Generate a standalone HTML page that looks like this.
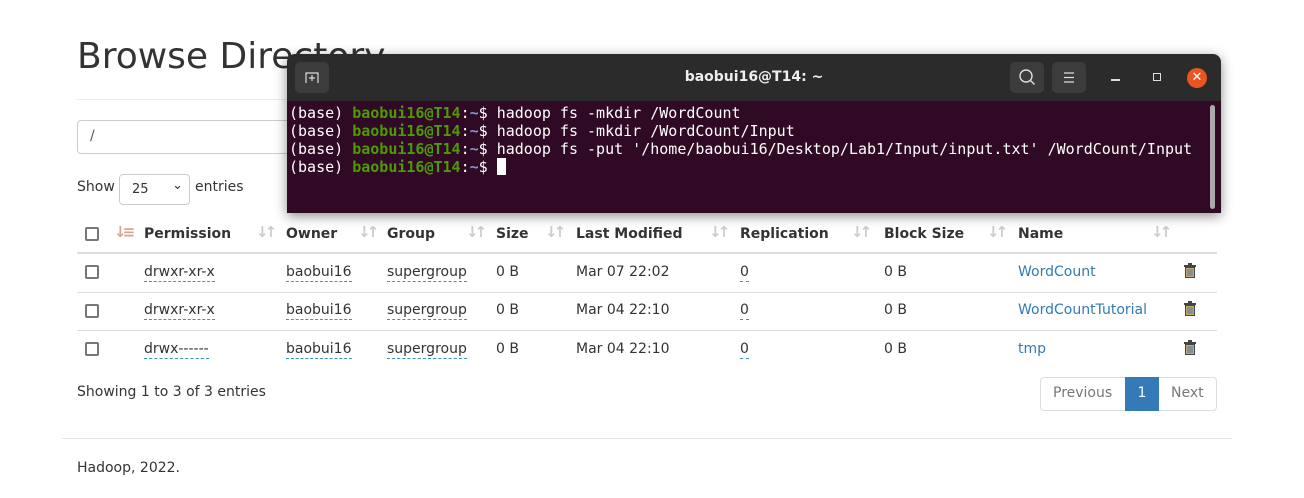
<!DOCTYPE html>
<html><head><style>
*{margin:0;padding:0;box-sizing:border-box}
body{width:1304px;height:498px;background:#fff;font-family:"DejaVu Sans","Liberation Sans",sans-serif;font-size:14px;color:#333;position:relative;overflow:hidden}
.a{position:absolute;white-space:nowrap}
.cb{position:absolute;width:14px;height:14px;border:2px solid #777;border-radius:2px;background:#fff}
.th{font-weight:bold;top:226px}
.si{position:absolute;color:#ccc;font-size:15px;font-weight:bold;top:223px;letter-spacing:-4px}
.hl{position:absolute;left:77px;width:1140px;height:1px;background:#ddd}
.u{border-bottom:1px dashed #3a8fd8;padding-bottom:1px}
.lk{color:#337ab7}
.term{position:absolute;left:287px;top:54px;width:934px;height:159px;border-radius:8px 8px 0 0;overflow:hidden;box-shadow:0 3px 12px rgba(0,0,0,.45)}
.tb{height:47px;background:#2b2b2b;position:relative}
.tbody{height:112px;background:#300a24;position:relative;font-family:"DejaVu Sans Mono","Liberation Mono",monospace;font-size:15px;color:#fff;padding:3px 0 0 2px;line-height:18px}
.g{color:#4e9a06;font-weight:bold}.bl{color:#729fcf;font-weight:bold}
.btn{position:absolute;top:8px;width:34px;height:31px;background:#3c3c3c;border-radius:5px;color:#ddd;text-align:center}
.trash{position:absolute;left:1184px;width:12px;height:15px}
</style></head><body>
<div class="a" style="left:77px;top:36px;font-size:36px;color:#333">Browse Directory</div>
<div class="hl" style="top:99px;background:#eee"></div>
<div class="a" style="left:77px;top:120px;width:300px;height:34px;border:1px solid #ccc;border-radius:4px;padding:7px 12px;color:#555">/</div>
<div class="a" style="left:77px;top:179px">Show</div>
<div class="a" style="left:119px;top:174px;width:71px;height:31px;border:1px solid #ccc;border-radius:4px;font-size:13px;padding:7px 12px">25<span style="position:absolute;right:6px;top:3px;font-size:13px">&#8964;</span></div>
<div class="a" style="left:195px;top:179px">entries</div>

<div class="cb" style="left:85px;top:227px"></div>
<div class="si" style="left:114px;color:#d9a58a;">&#8595;&#8801;</div>
<div class="a th" style="left:144px">Permission</div><div class="si" style="left:256px">&#8595;&#8593;</div>
<div class="a th" style="left:286px">Owner</div><div class="si" style="left:358px">&#8595;&#8593;</div>
<div class="a th" style="left:387px">Group</div><div class="si" style="left:466px">&#8595;&#8593;</div>
<div class="a th" style="left:496px">Size</div><div class="si" style="left:545px">&#8595;&#8593;</div>
<div class="a th" style="left:576px">Last Modified</div><div class="si" style="left:709px">&#8595;&#8593;</div>
<div class="a th" style="left:740px">Replication</div><div class="si" style="left:851px">&#8595;&#8593;</div>
<div class="a th" style="left:884px">Block Size</div><div class="si" style="left:987px">&#8595;&#8593;</div>
<div class="a th" style="left:1018px">Name</div><div class="si" style="left:1151px">&#8595;&#8593;</div>
<div class="hl" style="top:252px;height:2px"></div>

<div class="cb" style="left:85px;top:265px"></div>
<div class="a" style="left:144px;top:264px"><span class="u">drwxr-xr-x</span></div>
<div class="a" style="left:286px;top:264px"><span class="u">baobui16</span></div>
<div class="a" style="left:387px;top:264px"><span class="u">supergroup</span></div>
<div class="a" style="left:496px;top:264px">0 B</div>
<div class="a" style="left:576px;top:264px">Mar 07 22:02</div>
<div class="a" style="left:740px;top:264px"><span class="u">0</span></div>
<div class="a" style="left:884px;top:264px">0 B</div>
<div class="a lk" style="left:1018px;top:264px">WordCount</div>
<div class="hl" style="top:292px"></div>

<div class="cb" style="left:85px;top:304px"></div>
<div class="a" style="left:144px;top:302px"><span class="u">drwxr-xr-x</span></div>
<div class="a" style="left:286px;top:302px"><span class="u">baobui16</span></div>
<div class="a" style="left:387px;top:302px"><span class="u">supergroup</span></div>
<div class="a" style="left:496px;top:302px">0 B</div>
<div class="a" style="left:576px;top:302px">Mar 04 22:10</div>
<div class="a" style="left:740px;top:302px"><span class="u">0</span></div>
<div class="a" style="left:884px;top:302px">0 B</div>
<div class="a lk" style="left:1018px;top:302px">WordCountTutorial</div>
<div class="hl" style="top:330px"></div>

<div class="cb" style="left:85px;top:342px"></div>
<div class="a" style="left:144px;top:341px"><span class="u">drwx------</span></div>
<div class="a" style="left:286px;top:341px"><span class="u">baobui16</span></div>
<div class="a" style="left:387px;top:341px"><span class="u">supergroup</span></div>
<div class="a" style="left:496px;top:341px">0 B</div>
<div class="a" style="left:576px;top:341px">Mar 04 22:10</div>
<div class="a" style="left:740px;top:341px"><span class="u">0</span></div>
<div class="a" style="left:884px;top:341px">0 B</div>
<div class="a lk" style="left:1018px;top:341px">tmp</div>

<svg class="trash" style="top:263px" viewBox="0 0 12 15"><rect x="0" y="2" width="12" height="2" fill="#444"/><rect x="4" y="0" width="4" height="2" fill="#444"/><rect x="1.5" y="4.5" width="9" height="10" fill="#c9a96a" stroke="#444"/><path d="M4 6v7M6 6v7M8 6v7" stroke="#5a7fb0" stroke-width="1.2"/></svg>
<svg class="trash" style="top:301px" viewBox="0 0 12 15"><rect x="0" y="2" width="12" height="2" fill="#444"/><rect x="4" y="0" width="4" height="2" fill="#444"/><rect x="1.5" y="4.5" width="9" height="10" fill="#c9a96a" stroke="#444"/><path d="M4 6v7M6 6v7M8 6v7" stroke="#5a7fb0" stroke-width="1.2"/></svg>
<svg class="trash" style="top:340px" viewBox="0 0 12 15"><rect x="0" y="2" width="12" height="2" fill="#444"/><rect x="4" y="0" width="4" height="2" fill="#444"/><rect x="1.5" y="4.5" width="9" height="10" fill="#c9a96a" stroke="#444"/><path d="M4 6v7M6 6v7M8 6v7" stroke="#5a7fb0" stroke-width="1.2"/></svg>

<div class="a" style="left:77px;top:384px">Showing 1 to 3 of 3 entries</div>
<div class="a" style="left:1040px;top:377px;width:177px;height:34px;border:1px solid #ddd;border-radius:4px"></div>
<div class="a" style="left:1053px;top:385px;color:#777">Previous</div>
<div class="a" style="left:1125px;top:377px;width:34px;height:34px;background:#337ab7;color:#fff;text-align:center;padding-top:8px">1</div>
<div class="a" style="left:1171px;top:385px;color:#777">Next</div>
<div class="a" style="left:62px;top:438px;width:1170px;height:1px;background:#e5e5e5"></div>
<div class="a" style="left:77px;top:460px">Hadoop, 2022.</div>

<div class="term">
 <div class="tb">
  <div class="btn" style="left:8px"><svg width="34" height="31"><path d="M11 21V11h12v10" stroke="#ddd" stroke-width="1.2" fill="none"/><path d="M17 13v6M14 16h6" stroke="#ddd" stroke-width="1.2"/></svg></div>
  <div class="a" style="left:0;width:934px;text-align:center;top:15px;color:#eee;font-weight:bold;font-size:14px">baobui16@T14: ~</div>
  <div class="btn" style="left:723px"><svg width="34" height="31"><circle cx="16" cy="14" r="6" stroke="#ddd" stroke-width="1.4" fill="none"/><path d="M20.5 18.5l4 4" stroke="#ddd" stroke-width="1.4"/></svg></div>
  <div class="btn" style="left:765px"><svg width="34" height="31"><path d="M12 11h10M12 15.5h10M12 20h10" stroke="#ddd" stroke-width="1.2"/></svg></div>
  <div class="a" style="left:824px;top:25px;width:9px;height:1.5px;background:#ddd"></div>
  <div class="a" style="left:866px;top:19px;width:8px;height:8px;border:1.3px solid #ddd"></div>
  <div class="a" style="left:900px;top:14px;width:20px;height:20px;border-radius:50%;background:#e95420;color:#fff;text-align:center;font-size:13px;line-height:20px">&#10005;</div>
 </div>
 <div class="tbody">
  <div>(base) <span class="g">baobui16@T14</span>:<span class="bl">~</span>$ hadoop fs -mkdir /WordCount</div>
  <div>(base) <span class="g">baobui16@T14</span>:<span class="bl">~</span>$ hadoop fs -mkdir /WordCount/Input</div>
  <div>(base) <span class="g">baobui16@T14</span>:<span class="bl">~</span>$ hadoop fs -put '/home/baobui16/Desktop/Lab1/Input/input.txt' /WordCount/Input</div>
  <div>(base) <span class="g">baobui16@T14</span>:<span class="bl">~</span>$ <span style="display:inline-block;width:9px;height:17px;background:#fff;vertical-align:-3px"></span></div>
  <div class="a" style="left:923px;top:4px;width:5px;height:104px;background:#aaa;border-radius:3px"></div>
 </div>
</div>
</body></html>
